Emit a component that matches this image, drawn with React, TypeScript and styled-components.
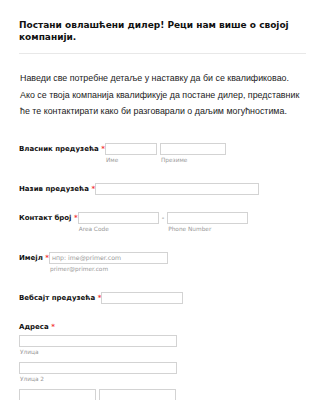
import React from "react";
import styled, { createGlobalStyle } from "styled-components";

const Global = createGlobalStyle`
  html, body { margin: 0; padding: 0; background: #fff; }
  body { font-family: "DejaVu Sans", Verdana, sans-serif; color: #000; }
  * { box-sizing: border-box; }
`;

const Page = styled.div`
  width: 325px;
  padding: 19px 19px 0 19px;
`;

const Header = styled.div`
  padding-bottom: 10px;
  border-bottom: 1px solid #e8e8e8;
`;

const Title = styled.h1`
  margin: 0;
  font-family: "DejaVu Sans", Verdana, sans-serif;
  font-weight: bold;
  font-size: 9px;
  line-height: 12px;
  color: #111;
`;

const Description = styled.p`
  margin: 16px 0 0 1px;
  font-family: "Liberation Sans", Arial, sans-serif;
  font-size: 8.9px;
  line-height: 16.5px;
  color: #222;
`;

const Form = styled.div`
  display: flex;
  flex-direction: column;
  gap: 17px;
  margin-top: 23.5px;
`;

const Row = styled.div<{ $stack?: boolean }>`
  display: flex;
  flex-direction: ${(p) => (p.$stack ? "column" : "row")};
  align-items: flex-start;
  gap: ${(p) => (p.$stack ? "2px" : "0")};
`;

const Label = styled.label`
  font-family: "DejaVu Sans", Verdana, sans-serif;
  font-weight: bold;
  font-size: 7px;
  line-height: 12px;
  color: #111;
  white-space: nowrap;
`;

const Star = styled.span`
  color: #f23a3c;
  margin-left: 2.5px;
  font-weight: bold;
`;

const Fields = styled.div`
  display: flex;
  align-items: flex-start;
  gap: 3px;
`;

const Field = styled.div`
  display: flex;
  flex-direction: column;
`;

const Input = styled.div<{ $w: number }>`
  width: ${(p) => p.$w}px;
  height: 12px;
  border: 1px solid #d3d3d3;
  background: #fff;
  font-family: "DejaVu Sans", Verdana, sans-serif;
  font-size: 6.2px;
  line-height: 10px;
  color: #9a9a9a;
  padding-left: 2px;
  overflow: hidden;
  white-space: nowrap;
`;

const Sub = styled.span<{ $after?: number }>`
  font-family: "DejaVu Sans", Verdana, sans-serif;
  font-size: 5.8px;
  line-height: 8px;
  margin-top: 1px;
  margin-bottom: ${(p) => p.$after ?? 2}px;
  padding-left: 1px;
  color: #999;
  white-space: nowrap;
`;

const Dash = styled.span`
  font-family: "DejaVu Sans", Verdana, sans-serif;
  font-size: 7px;
  line-height: 12px;
  color: #666;
`;

export default function App() {
  return (
    <Page>
      <Global />
      <Header>
        <Title>Постани овлашћени дилер! Реци нам више о својој компанији.</Title>
      </Header>
      <Description>
        Наведи све потребне детаље у наставку да би се квалификовао. Ако се твоја компанија
        квалификује да постане дилер, представник ће те контактирати како би разговарали о даљим
        могућностима.
      </Description>
      <Form>
        <Row>
          <Label>
            Власник предузећа<Star>*</Star>
          </Label>
          <Fields>
            <Field>
              <Input $w={52} />
              <Sub>Име</Sub>
            </Field>
            <Field>
              <Input $w={66} />
              <Sub>Презиме</Sub>
            </Field>
          </Fields>
        </Row>
        <Row>
          <Label>
            Назив предузећа<Star>*</Star>
          </Label>
          <Input $w={164} />
        </Row>
        <Row>
          <Label>
            Контакт број<Star>*</Star>
          </Label>
          <Fields>
            <Field>
              <Input $w={81} />
              <Sub>Area Code</Sub>
            </Field>
            <Dash>-</Dash>
            <Field>
              <Input $w={81} />
              <Sub>Phone Number</Sub>
            </Field>
          </Fields>
        </Row>
        <Row>
          <Label>
            Имејл<Star>*</Star>
          </Label>
          <Field>
            <Input $w={119}>нпр: ime@primer.com</Input>
            <Sub>primer@primer.com</Sub>
          </Field>
        </Row>
        <Row>
          <Label>
            Вебсајт предузећа<Star>*</Star>
          </Label>
          <Input $w={82} />
        </Row>
        <Row $stack>
          <Label>
            Адреса<Star>*</Star>
          </Label>
          <Field>
            <Input $w={158} />
            <Sub $after={6}>Улица</Sub>
            <Input $w={158} />
            <Sub $after={6}>Улица 2</Sub>
            <Fields>
              <Input $w={77} />
              <Input $w={77} />
            </Fields>
          </Field>
        </Row>
      </Form>
    </Page>
  );
}
